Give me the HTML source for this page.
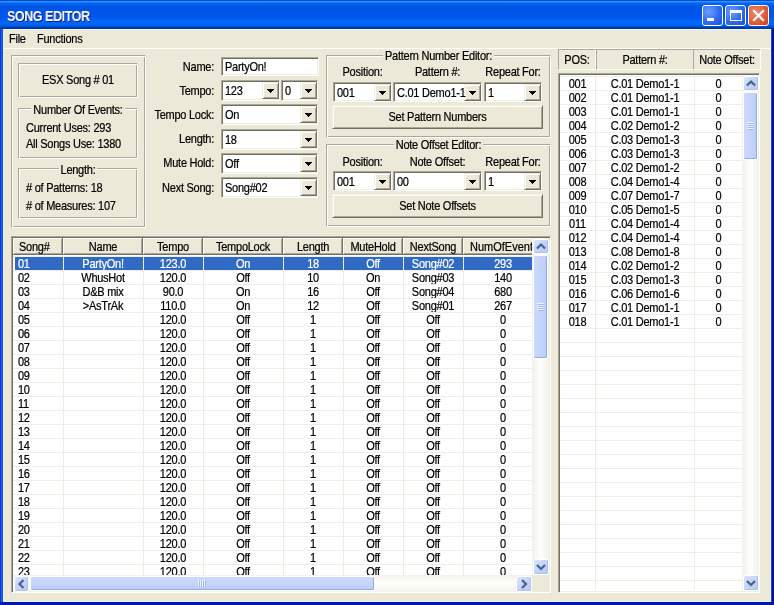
<!DOCTYPE html><html><head><meta charset="utf-8"><style>
html,body{margin:0;padding:0;}
body{width:774px;height:605px;overflow:hidden;position:relative;background:#ECE9D8;font-family:'Liberation Sans', sans-serif;font-size:11px;color:#000;}
.t{position:absolute;white-space:nowrap;line-height:13px;letter-spacing:-0.25px;will-change:transform;-webkit-text-stroke:0.2px currentColor;transform:scaleY(1.1);transform-origin:0 10.3px;}
</style></head><body>
<div style="position:absolute;left:0px;top:0px;width:774px;height:29px;background:linear-gradient(to bottom,#0044C8 0%,#0050E0 3%,#3593ff 5%,#288eff 6%,#127dff 8%,#036ffc 10%,#0262ee 14%,#0057e5 20%,#0054e3 24%,#0055eb 56%,#005bf5 66%,#026afe 76%,#0062ef 86%,#0052d6 92%,#0040ab 94%,#003092 100%);"></div>
<div style="position:absolute;left:6.5px;top:9px;font:bold 14px 'Liberation Sans', sans-serif;color:#fff;letter-spacing:-0.5px;text-shadow:1px 1px #0A1E80;white-space:nowrap;line-height:14px;will-change:transform;transform:scaleX(0.895);transform-origin:0 0;">SONG EDITOR</div>
<div style="position:absolute;left:0px;top:29px;width:3px;height:576px;background:linear-gradient(to right,#0032D4,#1A5AF0 50%,#2A50B0);"></div>
<div style="position:absolute;left:3px;top:29px;width:1px;height:573px;background:#E4F0FA;"></div>
<div style="position:absolute;left:3px;top:29px;width:768px;height:1px;background:#F6F8FC;"></div>
<div style="position:absolute;left:771px;top:29px;width:1px;height:576px;background:#2A44A8;"></div>
<div style="position:absolute;left:772px;top:29px;width:2px;height:576px;background:#0212A0;"></div>
<div style="position:absolute;left:770px;top:29px;width:1px;height:573px;background:#E4F0FA;"></div>
<div style="position:absolute;left:0px;top:602px;width:774px;height:3px;background:#0018A8;"></div>
<div style="position:absolute;left:3px;top:601px;width:768px;height:1px;background:#E4F0FA;"></div>
<div style="position:absolute;left:702px;top:5px;width:21px;height:21px;box-sizing:border-box;border:1px solid #fff;border-radius:3px;background:radial-gradient(circle at 30% 30%,#6FA0FF,#2F6BEF 55%,#1E50D8);"></div>
<div style="position:absolute;left:725px;top:5px;width:21px;height:21px;box-sizing:border-box;border:1px solid #fff;border-radius:3px;background:radial-gradient(circle at 30% 30%,#6FA0FF,#2F6BEF 55%,#1E50D8);"></div>
<div style="position:absolute;left:748px;top:5px;width:21px;height:21px;box-sizing:border-box;border:1px solid #fff;border-radius:3px;background:radial-gradient(circle at 35% 35%,#F08A6A,#E25A34 60%,#C8401C);"></div>
<div style="position:absolute;left:707px;top:18px;width:7px;height:3px;background:#fff;"></div>
<div style="position:absolute;left:730px;top:10px;width:12px;height:11px;box-sizing:border-box;border:1px solid #fff;border-top-width:3px;"></div>
<svg style="position:absolute;left:748px;top:5px" width="21" height="21"><path d="M6 6 L15 15 M15 6 L6 15" stroke="#fff" stroke-width="2.2" stroke-linecap="square"/></svg>
<div class="t" style="left:9px;top:33px;">File</div>
<div class="t" style="left:37px;top:33px;">Functions</div>
<div style="position:absolute;left:4px;top:48px;width:766px;height:1px;background:#fff;"></div>
<div style="position:absolute;left:11px;top:55px;width:135px;height:173px;box-sizing:border-box;border:1px solid;border-color:#ACA899 #FFFFFF #FFFFFF #ACA899;box-shadow:inset 1px 1px #FFFFFF, inset -1px -1px #ACA899;"></div>
<div style="position:absolute;left:18px;top:63px;width:120px;height:35px;box-sizing:border-box;border:1px solid;border-color:#ACA899 #FFFFFF #FFFFFF #ACA899;box-shadow:inset 1px 1px #FFFFFF, inset -1px -1px #ACA899;"></div>
<div class="t" style="left:18px;top:74px;width:120px;text-align:center;">ESX Song # 01</div>
<div style="position:absolute;left:18px;top:108px;width:120px;height:51px;box-sizing:border-box;border:1px solid;border-color:#ACA899 #FFFFFF #FFFFFF #ACA899;box-shadow:inset 1px 1px #FFFFFF, inset -1px -1px #ACA899;"></div>
<div class="t" style="left:18px;top:104px;width:120px;text-align:center;"><span style="background:#ECE9D8;padding:0 2px;">Number Of Events:</span></div>
<div class="t" style="left:26px;top:122px;">Current Uses: 293</div>
<div class="t" style="left:26px;top:138px;">All Songs Use: 1380</div>
<div style="position:absolute;left:18px;top:168px;width:120px;height:51px;box-sizing:border-box;border:1px solid;border-color:#ACA899 #FFFFFF #FFFFFF #ACA899;box-shadow:inset 1px 1px #FFFFFF, inset -1px -1px #ACA899;"></div>
<div class="t" style="left:18px;top:164px;width:120px;text-align:center;"><span style="background:#ECE9D8;padding:0 2px;">Length:</span></div>
<div class="t" style="left:26px;top:182px;"># of Patterns: 18</div>
<div class="t" style="left:26px;top:200px;"># of Measures: 107</div>
<div class="t" style="left:114px;top:61px;width:100px;text-align:right;">Name:</div>
<div class="t" style="left:114px;top:85px;width:100px;text-align:right;">Tempo:</div>
<div class="t" style="left:114px;top:109px;width:100px;text-align:right;">Tempo Lock:</div>
<div class="t" style="left:114px;top:133px;width:100px;text-align:right;">Length:</div>
<div class="t" style="left:114px;top:157px;width:100px;text-align:right;">Mute Hold:</div>
<div class="t" style="left:114px;top:182px;width:100px;text-align:right;">Next Song:</div>
<div style="position:absolute;left:221px;top:57px;width:98px;height:19px;box-sizing:border-box;background:#FFFFFF;border:1px solid;border-color:#ACA899 #FFFFFF #FFFFFF #ACA899;box-shadow:inset 1px 1px #716F64, inset -1px -1px #F1EFE2;"></div>
<div class="t" style="left:225px;top:61px;">PartyOn!</div>
<div style="position:absolute;left:221px;top:80px;width:59px;height:21px;box-sizing:border-box;background:#FFFFFF;border:1px solid;border-color:#ACA899 #FFFFFF #FFFFFF #ACA899;box-shadow:inset 1px 1px #716F64, inset -1px -1px #F1EFE2;"></div>
<div style="position:absolute;left:262px;top:82px;width:17px;height:17px;box-sizing:border-box;background:#ECE9D8;border:1px solid;border-color:#F1EFE2 #716F64 #716F64 #F1EFE2;box-shadow:inset 1px 1px #FFFFFF, inset -1px -1px #ACA899;"></div>
<div style="position:absolute;left:267px;top:89px;width:7px;height:1px;background:#000;"></div>
<div style="position:absolute;left:268px;top:90px;width:5px;height:1px;background:#000;"></div>
<div style="position:absolute;left:269px;top:91px;width:3px;height:1px;background:#000;"></div>
<div style="position:absolute;left:270px;top:92px;width:1px;height:1px;background:#000;"></div>
<div class="t" style="left:225px;top:85px;">123</div>
<div style="position:absolute;left:281px;top:80px;width:37px;height:21px;box-sizing:border-box;background:#FFFFFF;border:1px solid;border-color:#ACA899 #FFFFFF #FFFFFF #ACA899;box-shadow:inset 1px 1px #716F64, inset -1px -1px #F1EFE2;"></div>
<div style="position:absolute;left:300px;top:82px;width:17px;height:17px;box-sizing:border-box;background:#ECE9D8;border:1px solid;border-color:#F1EFE2 #716F64 #716F64 #F1EFE2;box-shadow:inset 1px 1px #FFFFFF, inset -1px -1px #ACA899;"></div>
<div style="position:absolute;left:305px;top:89px;width:7px;height:1px;background:#000;"></div>
<div style="position:absolute;left:306px;top:90px;width:5px;height:1px;background:#000;"></div>
<div style="position:absolute;left:307px;top:91px;width:3px;height:1px;background:#000;"></div>
<div style="position:absolute;left:308px;top:92px;width:1px;height:1px;background:#000;"></div>
<div class="t" style="left:285px;top:85px;">0</div>
<div style="position:absolute;left:221px;top:104px;width:97px;height:21px;box-sizing:border-box;background:#FFFFFF;border:1px solid;border-color:#ACA899 #FFFFFF #FFFFFF #ACA899;box-shadow:inset 1px 1px #716F64, inset -1px -1px #F1EFE2;"></div>
<div style="position:absolute;left:300px;top:106px;width:17px;height:17px;box-sizing:border-box;background:#ECE9D8;border:1px solid;border-color:#F1EFE2 #716F64 #716F64 #F1EFE2;box-shadow:inset 1px 1px #FFFFFF, inset -1px -1px #ACA899;"></div>
<div style="position:absolute;left:305px;top:113px;width:7px;height:1px;background:#000;"></div>
<div style="position:absolute;left:306px;top:114px;width:5px;height:1px;background:#000;"></div>
<div style="position:absolute;left:307px;top:115px;width:3px;height:1px;background:#000;"></div>
<div style="position:absolute;left:308px;top:116px;width:1px;height:1px;background:#000;"></div>
<div class="t" style="left:225px;top:109px;">On</div>
<div style="position:absolute;left:221px;top:129px;width:97px;height:21px;box-sizing:border-box;background:#FFFFFF;border:1px solid;border-color:#ACA899 #FFFFFF #FFFFFF #ACA899;box-shadow:inset 1px 1px #716F64, inset -1px -1px #F1EFE2;"></div>
<div style="position:absolute;left:300px;top:131px;width:17px;height:17px;box-sizing:border-box;background:#ECE9D8;border:1px solid;border-color:#F1EFE2 #716F64 #716F64 #F1EFE2;box-shadow:inset 1px 1px #FFFFFF, inset -1px -1px #ACA899;"></div>
<div style="position:absolute;left:305px;top:138px;width:7px;height:1px;background:#000;"></div>
<div style="position:absolute;left:306px;top:139px;width:5px;height:1px;background:#000;"></div>
<div style="position:absolute;left:307px;top:140px;width:3px;height:1px;background:#000;"></div>
<div style="position:absolute;left:308px;top:141px;width:1px;height:1px;background:#000;"></div>
<div class="t" style="left:225px;top:134px;">18</div>
<div style="position:absolute;left:221px;top:153px;width:97px;height:21px;box-sizing:border-box;background:#FFFFFF;border:1px solid;border-color:#ACA899 #FFFFFF #FFFFFF #ACA899;box-shadow:inset 1px 1px #716F64, inset -1px -1px #F1EFE2;"></div>
<div style="position:absolute;left:300px;top:155px;width:17px;height:17px;box-sizing:border-box;background:#ECE9D8;border:1px solid;border-color:#F1EFE2 #716F64 #716F64 #F1EFE2;box-shadow:inset 1px 1px #FFFFFF, inset -1px -1px #ACA899;"></div>
<div style="position:absolute;left:305px;top:162px;width:7px;height:1px;background:#000;"></div>
<div style="position:absolute;left:306px;top:163px;width:5px;height:1px;background:#000;"></div>
<div style="position:absolute;left:307px;top:164px;width:3px;height:1px;background:#000;"></div>
<div style="position:absolute;left:308px;top:165px;width:1px;height:1px;background:#000;"></div>
<div class="t" style="left:225px;top:158px;">Off</div>
<div style="position:absolute;left:221px;top:177px;width:97px;height:21px;box-sizing:border-box;background:#FFFFFF;border:1px solid;border-color:#ACA899 #FFFFFF #FFFFFF #ACA899;box-shadow:inset 1px 1px #716F64, inset -1px -1px #F1EFE2;"></div>
<div style="position:absolute;left:300px;top:179px;width:17px;height:17px;box-sizing:border-box;background:#ECE9D8;border:1px solid;border-color:#F1EFE2 #716F64 #716F64 #F1EFE2;box-shadow:inset 1px 1px #FFFFFF, inset -1px -1px #ACA899;"></div>
<div style="position:absolute;left:305px;top:186px;width:7px;height:1px;background:#000;"></div>
<div style="position:absolute;left:306px;top:187px;width:5px;height:1px;background:#000;"></div>
<div style="position:absolute;left:307px;top:188px;width:3px;height:1px;background:#000;"></div>
<div style="position:absolute;left:308px;top:189px;width:1px;height:1px;background:#000;"></div>
<div class="t" style="left:225px;top:182px;">Song#02</div>
<div style="position:absolute;left:326px;top:55px;width:225px;height:83px;box-sizing:border-box;border:1px solid;border-color:#ACA899 #FFFFFF #FFFFFF #ACA899;box-shadow:inset 1px 1px #FFFFFF, inset -1px -1px #ACA899;"></div>
<div class="t" style="left:326px;top:50px;width:225px;text-align:center;"><span style="background:#ECE9D8;padding:0 2px;">Pattern Number Editor:</span></div>
<div class="t" style="left:333px;top:66px;width:59px;text-align:center;">Position:</div>
<div class="t" style="left:393px;top:66px;width:89px;text-align:center;">Pattern #:</div>
<div class="t" style="left:484px;top:66px;width:58px;text-align:center;">Repeat For:</div>
<div style="position:absolute;left:333px;top:82px;width:59px;height:20px;box-sizing:border-box;background:#FFFFFF;border:1px solid;border-color:#ACA899 #FFFFFF #FFFFFF #ACA899;box-shadow:inset 1px 1px #716F64, inset -1px -1px #F1EFE2;"></div>
<div style="position:absolute;left:374px;top:84px;width:17px;height:17px;box-sizing:border-box;background:#ECE9D8;border:1px solid;border-color:#F1EFE2 #716F64 #716F64 #F1EFE2;box-shadow:inset 1px 1px #FFFFFF, inset -1px -1px #ACA899;"></div>
<div style="position:absolute;left:379px;top:91px;width:7px;height:1px;background:#000;"></div>
<div style="position:absolute;left:380px;top:92px;width:5px;height:1px;background:#000;"></div>
<div style="position:absolute;left:381px;top:93px;width:3px;height:1px;background:#000;"></div>
<div style="position:absolute;left:382px;top:94px;width:1px;height:1px;background:#000;"></div>
<div class="t" style="left:337px;top:87px;">001</div>
<div style="position:absolute;left:393px;top:82px;width:89px;height:20px;box-sizing:border-box;background:#FFFFFF;border:1px solid;border-color:#ACA899 #FFFFFF #FFFFFF #ACA899;box-shadow:inset 1px 1px #716F64, inset -1px -1px #F1EFE2;"></div>
<div style="position:absolute;left:464px;top:84px;width:17px;height:17px;box-sizing:border-box;background:#ECE9D8;border:1px solid;border-color:#F1EFE2 #716F64 #716F64 #F1EFE2;box-shadow:inset 1px 1px #FFFFFF, inset -1px -1px #ACA899;"></div>
<div style="position:absolute;left:469px;top:91px;width:7px;height:1px;background:#000;"></div>
<div style="position:absolute;left:470px;top:92px;width:5px;height:1px;background:#000;"></div>
<div style="position:absolute;left:471px;top:93px;width:3px;height:1px;background:#000;"></div>
<div style="position:absolute;left:472px;top:94px;width:1px;height:1px;background:#000;"></div>
<div class="t" style="left:397px;top:87px;">C.01 Demo1-1</div>
<div style="position:absolute;left:484px;top:82px;width:58px;height:20px;box-sizing:border-box;background:#FFFFFF;border:1px solid;border-color:#ACA899 #FFFFFF #FFFFFF #ACA899;box-shadow:inset 1px 1px #716F64, inset -1px -1px #F1EFE2;"></div>
<div style="position:absolute;left:524px;top:84px;width:17px;height:17px;box-sizing:border-box;background:#ECE9D8;border:1px solid;border-color:#F1EFE2 #716F64 #716F64 #F1EFE2;box-shadow:inset 1px 1px #FFFFFF, inset -1px -1px #ACA899;"></div>
<div style="position:absolute;left:529px;top:91px;width:7px;height:1px;background:#000;"></div>
<div style="position:absolute;left:530px;top:92px;width:5px;height:1px;background:#000;"></div>
<div style="position:absolute;left:531px;top:93px;width:3px;height:1px;background:#000;"></div>
<div style="position:absolute;left:532px;top:94px;width:1px;height:1px;background:#000;"></div>
<div class="t" style="left:488px;top:87px;">1</div>
<div style="position:absolute;left:332px;top:105px;width:211px;height:24px;box-sizing:border-box;background:#ECE9D8;border:1px solid;border-color:#F1EFE2 #716F64 #716F64 #F1EFE2;box-shadow:inset 1px 1px #FFFFFF, inset -1px -1px #ACA899;"></div>
<div class="t" style="left:332px;top:111px;width:211px;text-align:center;">Set Pattern Numbers</div>
<div style="position:absolute;left:326px;top:144px;width:225px;height:83px;box-sizing:border-box;border:1px solid;border-color:#ACA899 #FFFFFF #FFFFFF #ACA899;box-shadow:inset 1px 1px #FFFFFF, inset -1px -1px #ACA899;"></div>
<div class="t" style="left:326px;top:139px;width:225px;text-align:center;"><span style="background:#ECE9D8;padding:0 2px;">Note Offset Editor:</span></div>
<div class="t" style="left:333px;top:156px;width:59px;text-align:center;">Position:</div>
<div class="t" style="left:393px;top:156px;width:89px;text-align:center;">Note Offset:</div>
<div class="t" style="left:484px;top:156px;width:58px;text-align:center;">Repeat For:</div>
<div style="position:absolute;left:333px;top:171px;width:59px;height:20px;box-sizing:border-box;background:#FFFFFF;border:1px solid;border-color:#ACA899 #FFFFFF #FFFFFF #ACA899;box-shadow:inset 1px 1px #716F64, inset -1px -1px #F1EFE2;"></div>
<div style="position:absolute;left:374px;top:173px;width:17px;height:17px;box-sizing:border-box;background:#ECE9D8;border:1px solid;border-color:#F1EFE2 #716F64 #716F64 #F1EFE2;box-shadow:inset 1px 1px #FFFFFF, inset -1px -1px #ACA899;"></div>
<div style="position:absolute;left:379px;top:180px;width:7px;height:1px;background:#000;"></div>
<div style="position:absolute;left:380px;top:181px;width:5px;height:1px;background:#000;"></div>
<div style="position:absolute;left:381px;top:182px;width:3px;height:1px;background:#000;"></div>
<div style="position:absolute;left:382px;top:183px;width:1px;height:1px;background:#000;"></div>
<div class="t" style="left:337px;top:176px;">001</div>
<div style="position:absolute;left:393px;top:171px;width:89px;height:20px;box-sizing:border-box;background:#FFFFFF;border:1px solid;border-color:#ACA899 #FFFFFF #FFFFFF #ACA899;box-shadow:inset 1px 1px #716F64, inset -1px -1px #F1EFE2;"></div>
<div style="position:absolute;left:464px;top:173px;width:17px;height:17px;box-sizing:border-box;background:#ECE9D8;border:1px solid;border-color:#F1EFE2 #716F64 #716F64 #F1EFE2;box-shadow:inset 1px 1px #FFFFFF, inset -1px -1px #ACA899;"></div>
<div style="position:absolute;left:469px;top:180px;width:7px;height:1px;background:#000;"></div>
<div style="position:absolute;left:470px;top:181px;width:5px;height:1px;background:#000;"></div>
<div style="position:absolute;left:471px;top:182px;width:3px;height:1px;background:#000;"></div>
<div style="position:absolute;left:472px;top:183px;width:1px;height:1px;background:#000;"></div>
<div class="t" style="left:397px;top:176px;">00</div>
<div style="position:absolute;left:484px;top:171px;width:58px;height:20px;box-sizing:border-box;background:#FFFFFF;border:1px solid;border-color:#ACA899 #FFFFFF #FFFFFF #ACA899;box-shadow:inset 1px 1px #716F64, inset -1px -1px #F1EFE2;"></div>
<div style="position:absolute;left:524px;top:173px;width:17px;height:17px;box-sizing:border-box;background:#ECE9D8;border:1px solid;border-color:#F1EFE2 #716F64 #716F64 #F1EFE2;box-shadow:inset 1px 1px #FFFFFF, inset -1px -1px #ACA899;"></div>
<div style="position:absolute;left:529px;top:180px;width:7px;height:1px;background:#000;"></div>
<div style="position:absolute;left:530px;top:181px;width:5px;height:1px;background:#000;"></div>
<div style="position:absolute;left:531px;top:182px;width:3px;height:1px;background:#000;"></div>
<div style="position:absolute;left:532px;top:183px;width:1px;height:1px;background:#000;"></div>
<div class="t" style="left:488px;top:176px;">1</div>
<div style="position:absolute;left:332px;top:194px;width:211px;height:24px;box-sizing:border-box;background:#ECE9D8;border:1px solid;border-color:#F1EFE2 #716F64 #716F64 #F1EFE2;box-shadow:inset 1px 1px #FFFFFF, inset -1px -1px #ACA899;"></div>
<div class="t" style="left:332px;top:200px;width:211px;text-align:center;">Set Note Offsets</div>
<div style="position:absolute;left:11px;top:236px;width:540px;height:357px;box-sizing:border-box;background:#FFFFFF;border:1px solid;border-color:#ACA899 #FFFFFF #FFFFFF #ACA899;box-shadow:inset 1px 1px #716F64, inset -1px -1px #F1EFE2;"></div>
<div style="position:absolute;left:13px;top:238px;width:519px;height:337px;overflow:hidden;background:#fff;">
<div style="position:absolute;left:0px;top:0;width:50px;height:17px;box-sizing:border-box;background:#ECE9D8;border-right:1px solid #716F64;border-bottom:1px solid #716F64;box-shadow:inset 1px 1px #fff, inset -1px -1px #ACA899;"></div>
<div class="t" style="left:6px;top:3px;">Song#</div>
<div style="position:absolute;left:50px;top:0;width:80px;height:17px;box-sizing:border-box;background:#ECE9D8;border-right:1px solid #716F64;border-bottom:1px solid #716F64;box-shadow:inset 1px 1px #fff, inset -1px -1px #ACA899;"></div>
<div class="t" style="left:50px;top:3px;width:80px;text-align:center;">Name</div>
<div style="position:absolute;left:130px;top:0;width:60px;height:17px;box-sizing:border-box;background:#ECE9D8;border-right:1px solid #716F64;border-bottom:1px solid #716F64;box-shadow:inset 1px 1px #fff, inset -1px -1px #ACA899;"></div>
<div class="t" style="left:130px;top:3px;width:60px;text-align:center;">Tempo</div>
<div style="position:absolute;left:190px;top:0;width:80px;height:17px;box-sizing:border-box;background:#ECE9D8;border-right:1px solid #716F64;border-bottom:1px solid #716F64;box-shadow:inset 1px 1px #fff, inset -1px -1px #ACA899;"></div>
<div class="t" style="left:190px;top:3px;width:80px;text-align:center;">TempoLock</div>
<div style="position:absolute;left:270px;top:0;width:60px;height:17px;box-sizing:border-box;background:#ECE9D8;border-right:1px solid #716F64;border-bottom:1px solid #716F64;box-shadow:inset 1px 1px #fff, inset -1px -1px #ACA899;"></div>
<div class="t" style="left:270px;top:3px;width:60px;text-align:center;">Length</div>
<div style="position:absolute;left:330px;top:0;width:60px;height:17px;box-sizing:border-box;background:#ECE9D8;border-right:1px solid #716F64;border-bottom:1px solid #716F64;box-shadow:inset 1px 1px #fff, inset -1px -1px #ACA899;"></div>
<div class="t" style="left:330px;top:3px;width:60px;text-align:center;">MuteHold</div>
<div style="position:absolute;left:390px;top:0;width:60px;height:17px;box-sizing:border-box;background:#ECE9D8;border-right:1px solid #716F64;border-bottom:1px solid #716F64;box-shadow:inset 1px 1px #fff, inset -1px -1px #ACA899;"></div>
<div class="t" style="left:390px;top:3px;width:60px;text-align:center;">NextSong</div>
<div style="position:absolute;left:450px;top:0;width:80px;height:17px;box-sizing:border-box;background:#ECE9D8;border-right:1px solid #716F64;border-bottom:1px solid #716F64;box-shadow:inset 1px 1px #fff, inset -1px -1px #ACA899;"></div>
<div class="t" style="left:457px;top:3px;letter-spacing:0;">NumOfEvent</div>
<div style="position:absolute;left:2px;top:19px;width:600px;height:13px;background:#316AC5;"></div>
<div class="t" style="left:5px;top:20px;color:#fff;">01</div>
<div class="t" style="left:50px;top:20px;width:80px;text-align:center;color:#fff;">PartyOn!</div>
<div class="t" style="left:130px;top:20px;width:60px;text-align:center;color:#fff;">123.0</div>
<div class="t" style="left:190px;top:20px;width:80px;text-align:center;color:#fff;">On</div>
<div class="t" style="left:270px;top:20px;width:60px;text-align:center;color:#fff;">18</div>
<div class="t" style="left:330px;top:20px;width:60px;text-align:center;color:#fff;">Off</div>
<div class="t" style="left:390px;top:20px;width:60px;text-align:center;color:#fff;">Song#02</div>
<div class="t" style="left:450px;top:20px;width:80px;text-align:center;color:#fff;">293</div>
<div class="t" style="left:5px;top:34px;color:#000;">02</div>
<div class="t" style="left:50px;top:34px;width:80px;text-align:center;color:#000;">WhusHot</div>
<div class="t" style="left:130px;top:34px;width:60px;text-align:center;color:#000;">120.0</div>
<div class="t" style="left:190px;top:34px;width:80px;text-align:center;color:#000;">Off</div>
<div class="t" style="left:270px;top:34px;width:60px;text-align:center;color:#000;">10</div>
<div class="t" style="left:330px;top:34px;width:60px;text-align:center;color:#000;">On</div>
<div class="t" style="left:390px;top:34px;width:60px;text-align:center;color:#000;">Song#03</div>
<div class="t" style="left:450px;top:34px;width:80px;text-align:center;color:#000;">140</div>
<div class="t" style="left:5px;top:48px;color:#000;">03</div>
<div class="t" style="left:50px;top:48px;width:80px;text-align:center;color:#000;">D&amp;B mix</div>
<div class="t" style="left:130px;top:48px;width:60px;text-align:center;color:#000;">90.0</div>
<div class="t" style="left:190px;top:48px;width:80px;text-align:center;color:#000;">On</div>
<div class="t" style="left:270px;top:48px;width:60px;text-align:center;color:#000;">16</div>
<div class="t" style="left:330px;top:48px;width:60px;text-align:center;color:#000;">Off</div>
<div class="t" style="left:390px;top:48px;width:60px;text-align:center;color:#000;">Song#04</div>
<div class="t" style="left:450px;top:48px;width:80px;text-align:center;color:#000;">680</div>
<div class="t" style="left:5px;top:62px;color:#000;">04</div>
<div class="t" style="left:50px;top:62px;width:80px;text-align:center;color:#000;">&gt;AsTrAk</div>
<div class="t" style="left:130px;top:62px;width:60px;text-align:center;color:#000;">110.0</div>
<div class="t" style="left:190px;top:62px;width:80px;text-align:center;color:#000;">On</div>
<div class="t" style="left:270px;top:62px;width:60px;text-align:center;color:#000;">12</div>
<div class="t" style="left:330px;top:62px;width:60px;text-align:center;color:#000;">Off</div>
<div class="t" style="left:390px;top:62px;width:60px;text-align:center;color:#000;">Song#01</div>
<div class="t" style="left:450px;top:62px;width:80px;text-align:center;color:#000;">267</div>
<div class="t" style="left:5px;top:76px;color:#000;">05</div>
<div class="t" style="left:50px;top:76px;width:80px;text-align:center;color:#000;"></div>
<div class="t" style="left:130px;top:76px;width:60px;text-align:center;color:#000;">120.0</div>
<div class="t" style="left:190px;top:76px;width:80px;text-align:center;color:#000;">Off</div>
<div class="t" style="left:270px;top:76px;width:60px;text-align:center;color:#000;">1</div>
<div class="t" style="left:330px;top:76px;width:60px;text-align:center;color:#000;">Off</div>
<div class="t" style="left:390px;top:76px;width:60px;text-align:center;color:#000;">Off</div>
<div class="t" style="left:450px;top:76px;width:80px;text-align:center;color:#000;">0</div>
<div class="t" style="left:5px;top:90px;color:#000;">06</div>
<div class="t" style="left:50px;top:90px;width:80px;text-align:center;color:#000;"></div>
<div class="t" style="left:130px;top:90px;width:60px;text-align:center;color:#000;">120.0</div>
<div class="t" style="left:190px;top:90px;width:80px;text-align:center;color:#000;">Off</div>
<div class="t" style="left:270px;top:90px;width:60px;text-align:center;color:#000;">1</div>
<div class="t" style="left:330px;top:90px;width:60px;text-align:center;color:#000;">Off</div>
<div class="t" style="left:390px;top:90px;width:60px;text-align:center;color:#000;">Off</div>
<div class="t" style="left:450px;top:90px;width:80px;text-align:center;color:#000;">0</div>
<div class="t" style="left:5px;top:104px;color:#000;">07</div>
<div class="t" style="left:50px;top:104px;width:80px;text-align:center;color:#000;"></div>
<div class="t" style="left:130px;top:104px;width:60px;text-align:center;color:#000;">120.0</div>
<div class="t" style="left:190px;top:104px;width:80px;text-align:center;color:#000;">Off</div>
<div class="t" style="left:270px;top:104px;width:60px;text-align:center;color:#000;">1</div>
<div class="t" style="left:330px;top:104px;width:60px;text-align:center;color:#000;">Off</div>
<div class="t" style="left:390px;top:104px;width:60px;text-align:center;color:#000;">Off</div>
<div class="t" style="left:450px;top:104px;width:80px;text-align:center;color:#000;">0</div>
<div class="t" style="left:5px;top:118px;color:#000;">08</div>
<div class="t" style="left:50px;top:118px;width:80px;text-align:center;color:#000;"></div>
<div class="t" style="left:130px;top:118px;width:60px;text-align:center;color:#000;">120.0</div>
<div class="t" style="left:190px;top:118px;width:80px;text-align:center;color:#000;">Off</div>
<div class="t" style="left:270px;top:118px;width:60px;text-align:center;color:#000;">1</div>
<div class="t" style="left:330px;top:118px;width:60px;text-align:center;color:#000;">Off</div>
<div class="t" style="left:390px;top:118px;width:60px;text-align:center;color:#000;">Off</div>
<div class="t" style="left:450px;top:118px;width:80px;text-align:center;color:#000;">0</div>
<div class="t" style="left:5px;top:132px;color:#000;">09</div>
<div class="t" style="left:50px;top:132px;width:80px;text-align:center;color:#000;"></div>
<div class="t" style="left:130px;top:132px;width:60px;text-align:center;color:#000;">120.0</div>
<div class="t" style="left:190px;top:132px;width:80px;text-align:center;color:#000;">Off</div>
<div class="t" style="left:270px;top:132px;width:60px;text-align:center;color:#000;">1</div>
<div class="t" style="left:330px;top:132px;width:60px;text-align:center;color:#000;">Off</div>
<div class="t" style="left:390px;top:132px;width:60px;text-align:center;color:#000;">Off</div>
<div class="t" style="left:450px;top:132px;width:80px;text-align:center;color:#000;">0</div>
<div class="t" style="left:5px;top:146px;color:#000;">10</div>
<div class="t" style="left:50px;top:146px;width:80px;text-align:center;color:#000;"></div>
<div class="t" style="left:130px;top:146px;width:60px;text-align:center;color:#000;">120.0</div>
<div class="t" style="left:190px;top:146px;width:80px;text-align:center;color:#000;">Off</div>
<div class="t" style="left:270px;top:146px;width:60px;text-align:center;color:#000;">1</div>
<div class="t" style="left:330px;top:146px;width:60px;text-align:center;color:#000;">Off</div>
<div class="t" style="left:390px;top:146px;width:60px;text-align:center;color:#000;">Off</div>
<div class="t" style="left:450px;top:146px;width:80px;text-align:center;color:#000;">0</div>
<div class="t" style="left:5px;top:160px;color:#000;">11</div>
<div class="t" style="left:50px;top:160px;width:80px;text-align:center;color:#000;"></div>
<div class="t" style="left:130px;top:160px;width:60px;text-align:center;color:#000;">120.0</div>
<div class="t" style="left:190px;top:160px;width:80px;text-align:center;color:#000;">Off</div>
<div class="t" style="left:270px;top:160px;width:60px;text-align:center;color:#000;">1</div>
<div class="t" style="left:330px;top:160px;width:60px;text-align:center;color:#000;">Off</div>
<div class="t" style="left:390px;top:160px;width:60px;text-align:center;color:#000;">Off</div>
<div class="t" style="left:450px;top:160px;width:80px;text-align:center;color:#000;">0</div>
<div class="t" style="left:5px;top:174px;color:#000;">12</div>
<div class="t" style="left:50px;top:174px;width:80px;text-align:center;color:#000;"></div>
<div class="t" style="left:130px;top:174px;width:60px;text-align:center;color:#000;">120.0</div>
<div class="t" style="left:190px;top:174px;width:80px;text-align:center;color:#000;">Off</div>
<div class="t" style="left:270px;top:174px;width:60px;text-align:center;color:#000;">1</div>
<div class="t" style="left:330px;top:174px;width:60px;text-align:center;color:#000;">Off</div>
<div class="t" style="left:390px;top:174px;width:60px;text-align:center;color:#000;">Off</div>
<div class="t" style="left:450px;top:174px;width:80px;text-align:center;color:#000;">0</div>
<div class="t" style="left:5px;top:188px;color:#000;">13</div>
<div class="t" style="left:50px;top:188px;width:80px;text-align:center;color:#000;"></div>
<div class="t" style="left:130px;top:188px;width:60px;text-align:center;color:#000;">120.0</div>
<div class="t" style="left:190px;top:188px;width:80px;text-align:center;color:#000;">Off</div>
<div class="t" style="left:270px;top:188px;width:60px;text-align:center;color:#000;">1</div>
<div class="t" style="left:330px;top:188px;width:60px;text-align:center;color:#000;">Off</div>
<div class="t" style="left:390px;top:188px;width:60px;text-align:center;color:#000;">Off</div>
<div class="t" style="left:450px;top:188px;width:80px;text-align:center;color:#000;">0</div>
<div class="t" style="left:5px;top:202px;color:#000;">14</div>
<div class="t" style="left:50px;top:202px;width:80px;text-align:center;color:#000;"></div>
<div class="t" style="left:130px;top:202px;width:60px;text-align:center;color:#000;">120.0</div>
<div class="t" style="left:190px;top:202px;width:80px;text-align:center;color:#000;">Off</div>
<div class="t" style="left:270px;top:202px;width:60px;text-align:center;color:#000;">1</div>
<div class="t" style="left:330px;top:202px;width:60px;text-align:center;color:#000;">Off</div>
<div class="t" style="left:390px;top:202px;width:60px;text-align:center;color:#000;">Off</div>
<div class="t" style="left:450px;top:202px;width:80px;text-align:center;color:#000;">0</div>
<div class="t" style="left:5px;top:216px;color:#000;">15</div>
<div class="t" style="left:50px;top:216px;width:80px;text-align:center;color:#000;"></div>
<div class="t" style="left:130px;top:216px;width:60px;text-align:center;color:#000;">120.0</div>
<div class="t" style="left:190px;top:216px;width:80px;text-align:center;color:#000;">Off</div>
<div class="t" style="left:270px;top:216px;width:60px;text-align:center;color:#000;">1</div>
<div class="t" style="left:330px;top:216px;width:60px;text-align:center;color:#000;">Off</div>
<div class="t" style="left:390px;top:216px;width:60px;text-align:center;color:#000;">Off</div>
<div class="t" style="left:450px;top:216px;width:80px;text-align:center;color:#000;">0</div>
<div class="t" style="left:5px;top:230px;color:#000;">16</div>
<div class="t" style="left:50px;top:230px;width:80px;text-align:center;color:#000;"></div>
<div class="t" style="left:130px;top:230px;width:60px;text-align:center;color:#000;">120.0</div>
<div class="t" style="left:190px;top:230px;width:80px;text-align:center;color:#000;">Off</div>
<div class="t" style="left:270px;top:230px;width:60px;text-align:center;color:#000;">1</div>
<div class="t" style="left:330px;top:230px;width:60px;text-align:center;color:#000;">Off</div>
<div class="t" style="left:390px;top:230px;width:60px;text-align:center;color:#000;">Off</div>
<div class="t" style="left:450px;top:230px;width:80px;text-align:center;color:#000;">0</div>
<div class="t" style="left:5px;top:244px;color:#000;">17</div>
<div class="t" style="left:50px;top:244px;width:80px;text-align:center;color:#000;"></div>
<div class="t" style="left:130px;top:244px;width:60px;text-align:center;color:#000;">120.0</div>
<div class="t" style="left:190px;top:244px;width:80px;text-align:center;color:#000;">Off</div>
<div class="t" style="left:270px;top:244px;width:60px;text-align:center;color:#000;">1</div>
<div class="t" style="left:330px;top:244px;width:60px;text-align:center;color:#000;">Off</div>
<div class="t" style="left:390px;top:244px;width:60px;text-align:center;color:#000;">Off</div>
<div class="t" style="left:450px;top:244px;width:80px;text-align:center;color:#000;">0</div>
<div class="t" style="left:5px;top:258px;color:#000;">18</div>
<div class="t" style="left:50px;top:258px;width:80px;text-align:center;color:#000;"></div>
<div class="t" style="left:130px;top:258px;width:60px;text-align:center;color:#000;">120.0</div>
<div class="t" style="left:190px;top:258px;width:80px;text-align:center;color:#000;">Off</div>
<div class="t" style="left:270px;top:258px;width:60px;text-align:center;color:#000;">1</div>
<div class="t" style="left:330px;top:258px;width:60px;text-align:center;color:#000;">Off</div>
<div class="t" style="left:390px;top:258px;width:60px;text-align:center;color:#000;">Off</div>
<div class="t" style="left:450px;top:258px;width:80px;text-align:center;color:#000;">0</div>
<div class="t" style="left:5px;top:272px;color:#000;">19</div>
<div class="t" style="left:50px;top:272px;width:80px;text-align:center;color:#000;"></div>
<div class="t" style="left:130px;top:272px;width:60px;text-align:center;color:#000;">120.0</div>
<div class="t" style="left:190px;top:272px;width:80px;text-align:center;color:#000;">Off</div>
<div class="t" style="left:270px;top:272px;width:60px;text-align:center;color:#000;">1</div>
<div class="t" style="left:330px;top:272px;width:60px;text-align:center;color:#000;">Off</div>
<div class="t" style="left:390px;top:272px;width:60px;text-align:center;color:#000;">Off</div>
<div class="t" style="left:450px;top:272px;width:80px;text-align:center;color:#000;">0</div>
<div class="t" style="left:5px;top:286px;color:#000;">20</div>
<div class="t" style="left:50px;top:286px;width:80px;text-align:center;color:#000;"></div>
<div class="t" style="left:130px;top:286px;width:60px;text-align:center;color:#000;">120.0</div>
<div class="t" style="left:190px;top:286px;width:80px;text-align:center;color:#000;">Off</div>
<div class="t" style="left:270px;top:286px;width:60px;text-align:center;color:#000;">1</div>
<div class="t" style="left:330px;top:286px;width:60px;text-align:center;color:#000;">Off</div>
<div class="t" style="left:390px;top:286px;width:60px;text-align:center;color:#000;">Off</div>
<div class="t" style="left:450px;top:286px;width:80px;text-align:center;color:#000;">0</div>
<div class="t" style="left:5px;top:300px;color:#000;">21</div>
<div class="t" style="left:50px;top:300px;width:80px;text-align:center;color:#000;"></div>
<div class="t" style="left:130px;top:300px;width:60px;text-align:center;color:#000;">120.0</div>
<div class="t" style="left:190px;top:300px;width:80px;text-align:center;color:#000;">Off</div>
<div class="t" style="left:270px;top:300px;width:60px;text-align:center;color:#000;">1</div>
<div class="t" style="left:330px;top:300px;width:60px;text-align:center;color:#000;">Off</div>
<div class="t" style="left:390px;top:300px;width:60px;text-align:center;color:#000;">Off</div>
<div class="t" style="left:450px;top:300px;width:80px;text-align:center;color:#000;">0</div>
<div class="t" style="left:5px;top:314px;color:#000;">22</div>
<div class="t" style="left:50px;top:314px;width:80px;text-align:center;color:#000;"></div>
<div class="t" style="left:130px;top:314px;width:60px;text-align:center;color:#000;">120.0</div>
<div class="t" style="left:190px;top:314px;width:80px;text-align:center;color:#000;">Off</div>
<div class="t" style="left:270px;top:314px;width:60px;text-align:center;color:#000;">1</div>
<div class="t" style="left:330px;top:314px;width:60px;text-align:center;color:#000;">Off</div>
<div class="t" style="left:390px;top:314px;width:60px;text-align:center;color:#000;">Off</div>
<div class="t" style="left:450px;top:314px;width:80px;text-align:center;color:#000;">0</div>
<div class="t" style="left:5px;top:328px;color:#000;">23</div>
<div class="t" style="left:50px;top:328px;width:80px;text-align:center;color:#000;"></div>
<div class="t" style="left:130px;top:328px;width:60px;text-align:center;color:#000;">120.0</div>
<div class="t" style="left:190px;top:328px;width:80px;text-align:center;color:#000;">Off</div>
<div class="t" style="left:270px;top:328px;width:60px;text-align:center;color:#000;">1</div>
<div class="t" style="left:330px;top:328px;width:60px;text-align:center;color:#000;">Off</div>
<div class="t" style="left:390px;top:328px;width:60px;text-align:center;color:#000;">Off</div>
<div class="t" style="left:450px;top:328px;width:80px;text-align:center;color:#000;">0</div>
<div style="position:absolute;left:0;top:18px;width:600px;height:1px;background:#F0EFE8;"></div>
<div style="position:absolute;left:0;top:32px;width:600px;height:1px;background:#F0EFE8;"></div>
<div style="position:absolute;left:0;top:46px;width:600px;height:1px;background:#F0EEE4;"></div>
<div style="position:absolute;left:0;top:60px;width:600px;height:1px;background:#F0EEE4;"></div>
<div style="position:absolute;left:0;top:74px;width:600px;height:1px;background:#F0EEE4;"></div>
<div style="position:absolute;left:0;top:88px;width:600px;height:1px;background:#F0EEE4;"></div>
<div style="position:absolute;left:0;top:102px;width:600px;height:1px;background:#F0EEE4;"></div>
<div style="position:absolute;left:0;top:116px;width:600px;height:1px;background:#F0EEE4;"></div>
<div style="position:absolute;left:0;top:130px;width:600px;height:1px;background:#F0EEE4;"></div>
<div style="position:absolute;left:0;top:144px;width:600px;height:1px;background:#F0EEE4;"></div>
<div style="position:absolute;left:0;top:158px;width:600px;height:1px;background:#F0EEE4;"></div>
<div style="position:absolute;left:0;top:172px;width:600px;height:1px;background:#F0EEE4;"></div>
<div style="position:absolute;left:0;top:186px;width:600px;height:1px;background:#F0EEE4;"></div>
<div style="position:absolute;left:0;top:200px;width:600px;height:1px;background:#F0EEE4;"></div>
<div style="position:absolute;left:0;top:214px;width:600px;height:1px;background:#F0EEE4;"></div>
<div style="position:absolute;left:0;top:228px;width:600px;height:1px;background:#F0EEE4;"></div>
<div style="position:absolute;left:0;top:242px;width:600px;height:1px;background:#F0EEE4;"></div>
<div style="position:absolute;left:0;top:256px;width:600px;height:1px;background:#F0EEE4;"></div>
<div style="position:absolute;left:0;top:270px;width:600px;height:1px;background:#F0EEE4;"></div>
<div style="position:absolute;left:0;top:284px;width:600px;height:1px;background:#F0EEE4;"></div>
<div style="position:absolute;left:0;top:298px;width:600px;height:1px;background:#F0EEE4;"></div>
<div style="position:absolute;left:0;top:312px;width:600px;height:1px;background:#F0EEE4;"></div>
<div style="position:absolute;left:0;top:326px;width:600px;height:1px;background:#F0EEE4;"></div>
<div style="position:absolute;left:0;top:340px;width:600px;height:1px;background:#F0EEE4;"></div>
<div style="position:absolute;left:50px;top:18px;width:1px;height:400px;background:#F0EEE4;"></div>
<div style="position:absolute;left:130px;top:18px;width:1px;height:400px;background:#F0EEE4;"></div>
<div style="position:absolute;left:190px;top:18px;width:1px;height:400px;background:#F0EEE4;"></div>
<div style="position:absolute;left:270px;top:18px;width:1px;height:400px;background:#F0EEE4;"></div>
<div style="position:absolute;left:330px;top:18px;width:1px;height:400px;background:#F0EEE4;"></div>
<div style="position:absolute;left:390px;top:18px;width:1px;height:400px;background:#F0EEE4;"></div>
<div style="position:absolute;left:450px;top:18px;width:1px;height:400px;background:#F0EEE4;"></div>
<div style="position:absolute;left:530px;top:18px;width:1px;height:400px;background:#F0EEE4;"></div>
</div>
<div style="position:absolute;left:532px;top:238px;width:17px;height:337px;background:linear-gradient(to right,#F3F1EC,#FEFEFB 50%,#F3F1EC);"></div>
<div style="position:absolute;left:533px;top:239px;width:16px;height:15px;box-sizing:border-box;border:1px solid #FFFFFF;border-radius:2px;background:linear-gradient(135deg,#DCE6FD 0%,#C5D5FB 45%,#B7CAF5 100%);box-shadow:inset -1px -1px #B0C0E8;"></div>
<div style="position:absolute;left:533px;top:559px;width:16px;height:16px;box-sizing:border-box;border:1px solid #FFFFFF;border-radius:2px;background:linear-gradient(135deg,#DCE6FD 0%,#C5D5FB 45%,#B7CAF5 100%);box-shadow:inset -1px -1px #B0C0E8;"></div>
<div style="position:absolute;left:533px;top:255px;width:15px;height:104px;box-sizing:border-box;border:1px solid #FFFFFF;border-radius:2px;background:linear-gradient(to right,#CCDAFD,#C4D4FC 50%,#BACDF8);box-shadow:inset -1px -1px #95AADD;"></div>
<div style="position:absolute;left:537px;top:303px;width:7px;height:1px;background:#EEF4FE;"></div>
<div style="position:absolute;left:538px;top:304px;width:6px;height:1px;background:#A0B8F0;"></div>
<div style="position:absolute;left:537px;top:305px;width:7px;height:1px;background:#EEF4FE;"></div>
<div style="position:absolute;left:538px;top:306px;width:6px;height:1px;background:#A0B8F0;"></div>
<div style="position:absolute;left:537px;top:307px;width:7px;height:1px;background:#EEF4FE;"></div>
<div style="position:absolute;left:538px;top:308px;width:6px;height:1px;background:#A0B8F0;"></div>
<div style="position:absolute;left:537px;top:309px;width:7px;height:1px;background:#EEF4FE;"></div>
<div style="position:absolute;left:538px;top:310px;width:6px;height:1px;background:#A0B8F0;"></div>
<div style="position:absolute;left:13px;top:575px;width:519px;height:17px;background:linear-gradient(to bottom,#F3F1EC,#FEFEFB 50%,#F3F1EC);"></div>
<div style="position:absolute;left:14px;top:576px;width:15px;height:16px;box-sizing:border-box;border:1px solid #FFFFFF;border-radius:2px;background:linear-gradient(135deg,#DCE6FD 0%,#C5D5FB 45%,#B7CAF5 100%);box-shadow:inset -1px -1px #B0C0E8;"></div>
<div style="position:absolute;left:516px;top:576px;width:16px;height:16px;box-sizing:border-box;border:1px solid #FFFFFF;border-radius:2px;background:linear-gradient(135deg,#DCE6FD 0%,#C5D5FB 45%,#B7CAF5 100%);box-shadow:inset -1px -1px #B0C0E8;"></div>
<div style="position:absolute;left:30px;top:576px;width:345px;height:15px;box-sizing:border-box;border:1px solid #FFFFFF;border-radius:2px;background:linear-gradient(to bottom,#CCDAFD,#C4D4FC 50%,#BACDF8);box-shadow:inset -1px -1px #95AADD;"></div>
<div style="position:absolute;left:198px;top:580px;width:1px;height:7px;background:#EEF4FE;"></div>
<div style="position:absolute;left:199px;top:581px;width:1px;height:6px;background:#A0B8F0;"></div>
<div style="position:absolute;left:200px;top:580px;width:1px;height:7px;background:#EEF4FE;"></div>
<div style="position:absolute;left:201px;top:581px;width:1px;height:6px;background:#A0B8F0;"></div>
<div style="position:absolute;left:202px;top:580px;width:1px;height:7px;background:#EEF4FE;"></div>
<div style="position:absolute;left:203px;top:581px;width:1px;height:6px;background:#A0B8F0;"></div>
<div style="position:absolute;left:204px;top:580px;width:1px;height:7px;background:#EEF4FE;"></div>
<div style="position:absolute;left:205px;top:581px;width:1px;height:6px;background:#A0B8F0;"></div>
<div style="position:absolute;left:532px;top:575px;width:17px;height:17px;background:#ECE9D8;"></div>
<div style="position:absolute;left:558px;top:49px;width:38px;height:21px;box-sizing:border-box;border:1px solid;border-color:#ACA899 #fff #fff #ACA899;background:#ECE9D8;"></div>
<div class="t" style="left:558px;top:54px;width:38px;text-align:center;">POS:</div>
<div style="position:absolute;left:596px;top:49px;width:98px;height:21px;box-sizing:border-box;border:1px solid;border-color:#ACA899 #fff #fff #ACA899;background:#ECE9D8;"></div>
<div class="t" style="left:596px;top:54px;width:98px;text-align:center;">Pattern #:</div>
<div style="position:absolute;left:693px;top:49px;width:68px;height:21px;box-sizing:border-box;border:1px solid;border-color:#ACA899 #fff #fff #ACA899;background:#ECE9D8;"></div>
<div class="t" style="left:693px;top:54px;width:68px;text-align:center;">Note Offset:</div>
<div style="position:absolute;left:558px;top:73px;width:202px;height:520px;box-sizing:border-box;background:#FFFFFF;border:1px solid;border-color:#ACA899 #FFFFFF #FFFFFF #ACA899;box-shadow:inset 1px 1px #716F64, inset -1px -1px #F1EFE2;"></div>
<div style="position:absolute;left:560px;top:75px;width:182px;height:516px;overflow:hidden;background:#fff;">
<div style="position:absolute;left:0;top:1px;width:182px;height:1px;background:#F0EEE4;"></div>
<div style="position:absolute;left:0;top:15px;width:182px;height:1px;background:#F0EEE4;"></div>
<div style="position:absolute;left:0;top:29px;width:182px;height:1px;background:#F0EEE4;"></div>
<div style="position:absolute;left:0;top:43px;width:182px;height:1px;background:#F0EEE4;"></div>
<div style="position:absolute;left:0;top:57px;width:182px;height:1px;background:#F0EEE4;"></div>
<div style="position:absolute;left:0;top:71px;width:182px;height:1px;background:#F0EEE4;"></div>
<div style="position:absolute;left:0;top:85px;width:182px;height:1px;background:#F0EEE4;"></div>
<div style="position:absolute;left:0;top:99px;width:182px;height:1px;background:#F0EEE4;"></div>
<div style="position:absolute;left:0;top:113px;width:182px;height:1px;background:#F0EEE4;"></div>
<div style="position:absolute;left:0;top:127px;width:182px;height:1px;background:#F0EEE4;"></div>
<div style="position:absolute;left:0;top:141px;width:182px;height:1px;background:#F0EEE4;"></div>
<div style="position:absolute;left:0;top:155px;width:182px;height:1px;background:#F0EEE4;"></div>
<div style="position:absolute;left:0;top:169px;width:182px;height:1px;background:#F0EEE4;"></div>
<div style="position:absolute;left:0;top:183px;width:182px;height:1px;background:#F0EEE4;"></div>
<div style="position:absolute;left:0;top:197px;width:182px;height:1px;background:#F0EEE4;"></div>
<div style="position:absolute;left:0;top:211px;width:182px;height:1px;background:#F0EEE4;"></div>
<div style="position:absolute;left:0;top:225px;width:182px;height:1px;background:#F0EEE4;"></div>
<div style="position:absolute;left:0;top:239px;width:182px;height:1px;background:#F0EEE4;"></div>
<div style="position:absolute;left:0;top:253px;width:182px;height:1px;background:#F0EEE4;"></div>
<div style="position:absolute;left:0;top:267px;width:182px;height:1px;background:#F0EEE4;"></div>
<div style="position:absolute;left:0;top:281px;width:182px;height:1px;background:#F0EEE4;"></div>
<div style="position:absolute;left:0;top:295px;width:182px;height:1px;background:#F0EEE4;"></div>
<div style="position:absolute;left:0;top:309px;width:182px;height:1px;background:#F0EEE4;"></div>
<div style="position:absolute;left:0;top:323px;width:182px;height:1px;background:#F0EEE4;"></div>
<div style="position:absolute;left:0;top:337px;width:182px;height:1px;background:#F0EEE4;"></div>
<div style="position:absolute;left:0;top:351px;width:182px;height:1px;background:#F0EEE4;"></div>
<div style="position:absolute;left:0;top:365px;width:182px;height:1px;background:#F0EEE4;"></div>
<div style="position:absolute;left:0;top:379px;width:182px;height:1px;background:#F0EEE4;"></div>
<div style="position:absolute;left:0;top:393px;width:182px;height:1px;background:#F0EEE4;"></div>
<div style="position:absolute;left:0;top:407px;width:182px;height:1px;background:#F0EEE4;"></div>
<div style="position:absolute;left:0;top:421px;width:182px;height:1px;background:#F0EEE4;"></div>
<div style="position:absolute;left:0;top:435px;width:182px;height:1px;background:#F0EEE4;"></div>
<div style="position:absolute;left:0;top:449px;width:182px;height:1px;background:#F0EEE4;"></div>
<div style="position:absolute;left:0;top:463px;width:182px;height:1px;background:#F0EEE4;"></div>
<div style="position:absolute;left:0;top:477px;width:182px;height:1px;background:#F0EEE4;"></div>
<div style="position:absolute;left:0;top:491px;width:182px;height:1px;background:#F0EEE4;"></div>
<div style="position:absolute;left:0;top:505px;width:182px;height:1px;background:#F0EEE4;"></div>
<div style="position:absolute;left:35px;top:0;width:1px;height:515px;background:#F0EEE4;"></div>
<div style="position:absolute;left:134px;top:0;width:1px;height:515px;background:#F0EEE4;"></div>
<div class="t" style="left:0;top:3px;width:35px;text-align:center;">001</div>
<div class="t" style="left:36px;top:3px;width:98px;text-align:center;">C.01 Demo1-1</div>
<div class="t" style="left:135px;top:3px;width:47px;text-align:center;">0</div>
<div class="t" style="left:0;top:17px;width:35px;text-align:center;">002</div>
<div class="t" style="left:36px;top:17px;width:98px;text-align:center;">C.01 Demo1-1</div>
<div class="t" style="left:135px;top:17px;width:47px;text-align:center;">0</div>
<div class="t" style="left:0;top:31px;width:35px;text-align:center;">003</div>
<div class="t" style="left:36px;top:31px;width:98px;text-align:center;">C.01 Demo1-1</div>
<div class="t" style="left:135px;top:31px;width:47px;text-align:center;">0</div>
<div class="t" style="left:0;top:45px;width:35px;text-align:center;">004</div>
<div class="t" style="left:36px;top:45px;width:98px;text-align:center;">C.02 Demo1-2</div>
<div class="t" style="left:135px;top:45px;width:47px;text-align:center;">0</div>
<div class="t" style="left:0;top:59px;width:35px;text-align:center;">005</div>
<div class="t" style="left:36px;top:59px;width:98px;text-align:center;">C.03 Demo1-3</div>
<div class="t" style="left:135px;top:59px;width:47px;text-align:center;">0</div>
<div class="t" style="left:0;top:73px;width:35px;text-align:center;">006</div>
<div class="t" style="left:36px;top:73px;width:98px;text-align:center;">C.03 Demo1-3</div>
<div class="t" style="left:135px;top:73px;width:47px;text-align:center;">0</div>
<div class="t" style="left:0;top:87px;width:35px;text-align:center;">007</div>
<div class="t" style="left:36px;top:87px;width:98px;text-align:center;">C.02 Demo1-2</div>
<div class="t" style="left:135px;top:87px;width:47px;text-align:center;">0</div>
<div class="t" style="left:0;top:101px;width:35px;text-align:center;">008</div>
<div class="t" style="left:36px;top:101px;width:98px;text-align:center;">C.04 Demo1-4</div>
<div class="t" style="left:135px;top:101px;width:47px;text-align:center;">0</div>
<div class="t" style="left:0;top:115px;width:35px;text-align:center;">009</div>
<div class="t" style="left:36px;top:115px;width:98px;text-align:center;">C.07 Demo1-7</div>
<div class="t" style="left:135px;top:115px;width:47px;text-align:center;">0</div>
<div class="t" style="left:0;top:129px;width:35px;text-align:center;">010</div>
<div class="t" style="left:36px;top:129px;width:98px;text-align:center;">C.05 Demo1-5</div>
<div class="t" style="left:135px;top:129px;width:47px;text-align:center;">0</div>
<div class="t" style="left:0;top:143px;width:35px;text-align:center;">011</div>
<div class="t" style="left:36px;top:143px;width:98px;text-align:center;">C.04 Demo1-4</div>
<div class="t" style="left:135px;top:143px;width:47px;text-align:center;">0</div>
<div class="t" style="left:0;top:157px;width:35px;text-align:center;">012</div>
<div class="t" style="left:36px;top:157px;width:98px;text-align:center;">C.04 Demo1-4</div>
<div class="t" style="left:135px;top:157px;width:47px;text-align:center;">0</div>
<div class="t" style="left:0;top:171px;width:35px;text-align:center;">013</div>
<div class="t" style="left:36px;top:171px;width:98px;text-align:center;">C.08 Demo1-8</div>
<div class="t" style="left:135px;top:171px;width:47px;text-align:center;">0</div>
<div class="t" style="left:0;top:185px;width:35px;text-align:center;">014</div>
<div class="t" style="left:36px;top:185px;width:98px;text-align:center;">C.02 Demo1-2</div>
<div class="t" style="left:135px;top:185px;width:47px;text-align:center;">0</div>
<div class="t" style="left:0;top:199px;width:35px;text-align:center;">015</div>
<div class="t" style="left:36px;top:199px;width:98px;text-align:center;">C.03 Demo1-3</div>
<div class="t" style="left:135px;top:199px;width:47px;text-align:center;">0</div>
<div class="t" style="left:0;top:213px;width:35px;text-align:center;">016</div>
<div class="t" style="left:36px;top:213px;width:98px;text-align:center;">C.06 Demo1-6</div>
<div class="t" style="left:135px;top:213px;width:47px;text-align:center;">0</div>
<div class="t" style="left:0;top:227px;width:35px;text-align:center;">017</div>
<div class="t" style="left:36px;top:227px;width:98px;text-align:center;">C.01 Demo1-1</div>
<div class="t" style="left:135px;top:227px;width:47px;text-align:center;">0</div>
<div class="t" style="left:0;top:241px;width:35px;text-align:center;">018</div>
<div class="t" style="left:36px;top:241px;width:98px;text-align:center;">C.01 Demo1-1</div>
<div class="t" style="left:135px;top:241px;width:47px;text-align:center;">0</div>
</div>
<div style="position:absolute;left:742px;top:75px;width:17px;height:516px;background:linear-gradient(to right,#F3F1EC,#FEFEFB 50%,#F3F1EC);"></div>
<div style="position:absolute;left:743px;top:76px;width:16px;height:15px;box-sizing:border-box;border:1px solid #FFFFFF;border-radius:2px;background:linear-gradient(135deg,#DCE6FD 0%,#C5D5FB 45%,#B7CAF5 100%);box-shadow:inset -1px -1px #B0C0E8;"></div>
<div style="position:absolute;left:743px;top:575px;width:16px;height:16px;box-sizing:border-box;border:1px solid #FFFFFF;border-radius:2px;background:linear-gradient(135deg,#DCE6FD 0%,#C5D5FB 45%,#B7CAF5 100%);box-shadow:inset -1px -1px #B0C0E8;"></div>
<div style="position:absolute;left:743px;top:92px;width:15px;height:68px;box-sizing:border-box;border:1px solid #FFFFFF;border-radius:2px;background:linear-gradient(to right,#CCDAFD,#C4D4FC 50%,#BACDF8);box-shadow:inset -1px -1px #95AADD;"></div>
<div style="position:absolute;left:747px;top:122px;width:7px;height:1px;background:#EEF4FE;"></div>
<div style="position:absolute;left:748px;top:123px;width:6px;height:1px;background:#A0B8F0;"></div>
<div style="position:absolute;left:747px;top:124px;width:7px;height:1px;background:#EEF4FE;"></div>
<div style="position:absolute;left:748px;top:125px;width:6px;height:1px;background:#A0B8F0;"></div>
<div style="position:absolute;left:747px;top:126px;width:7px;height:1px;background:#EEF4FE;"></div>
<div style="position:absolute;left:748px;top:127px;width:6px;height:1px;background:#A0B8F0;"></div>
<div style="position:absolute;left:747px;top:128px;width:7px;height:1px;background:#EEF4FE;"></div>
<div style="position:absolute;left:748px;top:129px;width:6px;height:1px;background:#A0B8F0;"></div>
<svg style="position:absolute;left:0;top:0" width="774" height="605"><path d="M537.0,248.5 L541.0,244.5 L545.0,248.5" fill="none" stroke="#4D6185" stroke-width="2.2"/><path d="M537.0,565.0 L541.0,569.0 L545.0,565.0" fill="none" stroke="#4D6185" stroke-width="2.2"/><path d="M23.5,580.0 L19.5,584.0 L23.5,588.0" fill="none" stroke="#4D6185" stroke-width="2.2"/><path d="M522.0,580.0 L526.0,584.0 L522.0,588.0" fill="none" stroke="#4D6185" stroke-width="2.2"/><path d="M747.0,85.5 L751.0,81.5 L755.0,85.5" fill="none" stroke="#4D6185" stroke-width="2.2"/><path d="M747.0,581.0 L751.0,585.0 L755.0,581.0" fill="none" stroke="#4D6185" stroke-width="2.2"/></svg>
</body></html>
